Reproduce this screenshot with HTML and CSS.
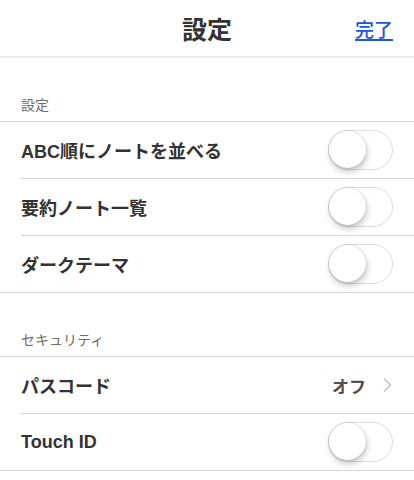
FILE: index.html
```html
<!DOCTYPE html>
<html lang="ja">
<head>
  <meta charset="UTF-8">
  <title>設定</title>
  <link rel="stylesheet" href="styles.css">
</head>
<body>
  <header class="barra">
    <h1 class="titulo">設定</h1>
    <a class="pronto" href="#">完了</a>
  </header>

  <section class="secao">
    <h2 class="secao-titulo">設定</h2>
    <ul class="lista">
      <li class="linha">
        <span class="rotulo">ABC順にノートを並べる</span>
        <span class="chave"><span class="botao"></span></span>
      </li>
      <li class="linha">
        <span class="rotulo">要約ノート一覧</span>
        <span class="chave"><span class="botao"></span></span>
      </li>
      <li class="linha">
        <span class="rotulo">ダークテーマ</span>
        <span class="chave"><span class="botao"></span></span>
      </li>
    </ul>
  </section>

  <section class="secao">
    <h2 class="secao-titulo">セキュリティ</h2>
    <ul class="lista">
      <li class="linha">
        <span class="rotulo">パスコード</span>
        <span class="valor">
          オフ
          <svg class="seta" width="9" height="14" viewBox="0 0 9 14">
            <path d="M1.5 1 L7.5 7 L1.5 13" fill="none" stroke="#c4c4c8" stroke-width="1.6" stroke-linecap="round" stroke-linejoin="round"/>
          </svg>
        </span>
      </li>
      <li class="linha">
        <span class="rotulo">Touch ID</span>
        <span class="chave"><span class="botao"></span></span>
      </li>
    </ul>
  </section>
</body>
</html>
```

FILE: styles.css
```css
body {
  margin: 0;
  font-family: "Liberation Sans", "Noto Sans CJK JP", sans-serif;
  color: #333;
  background-color: #fff;
}

.barra {
  position: relative;
  height: 56px;
  display: flex;
  align-items: center;
  justify-content: center;
  border-bottom: 2px solid #ededed;
}

.titulo {
  margin: 0;
  font-size: 25px;
  font-weight: 700;
  color: #333;
}

.pronto {
  position: absolute;
  right: 21px;
  top: 15px;
  font-size: 19px;
  font-weight: 500;
  color: #1c55e0;
  text-decoration: underline;
  text-decoration-thickness: 2px;
  text-underline-offset: 2px;
}

.secao-titulo {
  margin: 0;
  height: 63px;
  box-sizing: border-box;
  display: flex;
  align-items: flex-end;
  padding: 0 21px 6px;
  font-size: 14px;
  font-weight: 400;
  line-height: 20px;
  color: #6b6b6b;
}

.lista {
  list-style: none;
  margin: 0;
  padding: 0;
  border-top: 1px solid #d4d4d4;
  border-bottom: 1px solid #d4d4d4;
}

.linha {
  display: flex;
  align-items: center;
  justify-content: space-between;
  height: 56px;
  margin-left: 21px;
  padding-right: 21px;
}

.linha + .linha {
  border-top: 1px solid #d4d4d4;
}

.rotulo {
  font-size: 18px;
  font-weight: 600;
  color: #333;
}

.valor {
  display: flex;
  align-items: center;
  gap: 17px;
  font-size: 17px;
  font-weight: 600;
  color: #505050;
  padding-right: 1px;
}

.chave {
  position: relative;
  width: 65px;
  height: 40px;
  box-sizing: border-box;
  border: 1.5px solid #dcdcdc;
  border-radius: 20px;
  background-color: #fff;
}

.botao {
  position: absolute;
  left: 0;
  top: 0;
  width: 37px;
  height: 37px;
  border-radius: 50%;
  background-color: #fff;
  box-shadow: 0 0 0 1px rgba(0, 0, 0, 0.07), 1px 4px 6px rgba(0, 0, 0, 0.22);
}
```
